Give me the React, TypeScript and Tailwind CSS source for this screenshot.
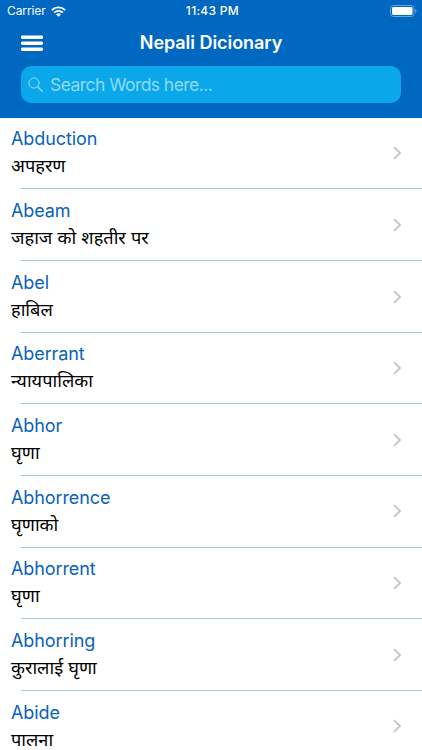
type Entry = {
  word: string
  meaning: string
}

const ENTRIES: Entry[] = [
  { word: 'Abduction', meaning: 'अपहरण' },
  { word: 'Abeam', meaning: 'जहाज को शहतीर पर' },
  { word: 'Abel', meaning: 'हाबिल' },
  { word: 'Aberrant', meaning: 'न्यायपालिका' },
  { word: 'Abhor', meaning: 'घृणा' },
  { word: 'Abhorrence', meaning: 'घृणाको' },
  { word: 'Abhorrent', meaning: 'घृणा' },
  { word: 'Abhorring', meaning: 'कुरालाई घृणा' },
  { word: 'Abide', meaning: 'पालना' },
]

function WifiIcon() {
  return (
    <svg className="h-[11px] w-[15px]" viewBox="0 0 15 11" fill="none" stroke="white" strokeWidth="1.9">
      <path d="M0.8 4.1a9.5 9.5 0 0 1 13.4 0" />
      <path d="M3.2 6.6a6.1 6.1 0 0 1 8.6 0" />
      <path d="M7.5 10.8L5.1 8.4a3.4 3.4 0 0 1 4.8 0z" fill="white" stroke="none" />
    </svg>
  )
}

function BatteryIcon() {
  return (
    <svg className="h-[12px] w-[27px]" viewBox="0 0 27 12" fill="none">
      <rect x="0.5" y="0.5" width="23.5" height="11" rx="2.8" stroke="#66a4da" />
      <rect x="2" y="2" width="20.5" height="8" rx="1.4" fill="white" />
      <path d="M25.2 4v4c.8-.3 1.3-1.1 1.3-2s-.5-1.7-1.3-2z" fill="#66a4da" />
    </svg>
  )
}

function StatusBar() {
  return (
    <div className="grid h-[22px] grid-cols-3 items-center pr-[5px] pl-[7px] text-[12px] text-white">
      <div className="flex items-center gap-[5px]">
        <span className="tracking-[-0.1px]">Carrier</span>
        <WifiIcon />
      </div>
      <span className="pl-px text-center font-medium tracking-[0.3px]">11:43 PM</span>
      <div className="flex justify-end pb-px">
        <BatteryIcon />
      </div>
    </div>
  )
}

function Header() {
  return (
    <header className="h-[118px] shrink-0 bg-[#0168c1]">
      <StatusBar />
      <div className="grid h-[44px] grid-cols-[44px_1fr_44px] items-center">
        <button type="button" className="pb-[3px] pl-[21px]" aria-label="Menu">
          <svg className="h-[16px] w-[22px]" viewBox="0 0 22 16" fill="white">
            <rect y="0.6" width="22" height="3.4" rx="1.4" />
            <rect y="6.600" width="22" height="3.400" rx="1.400" />
            <rect y="12.600" width="22" height="3.400" rx="1.400" />
          </svg>
        </button>
        <h1 className="pb-0.5 text-center text-[18px] leading-none font-semibold tracking-[-0.05px] text-white">
          Nepali Dicionary
        </h1>
      </div>
      <div className="mx-[21px] flex h-[37px] items-center gap-[7px] rounded-[10px] bg-[#0ba7eb] pl-[7px] text-[#90dbf9]">
        <svg className="h-[15px] w-[15px]" viewBox="0 0 15 15" fill="none" stroke="currentColor" strokeLinecap="round">
          <circle cx="6" cy="6" r="5.1" />
          <path d="M9.7 9.7l4.5 4.5" strokeWidth="1.3" />
        </svg>
        <span className="text-[17.5px] leading-none tracking-[-0.55px]">Search Words here...</span>
      </div>
    </header>
  )
}

function EntryRow({ word, meaning }: Entry) {
  return (
    <li className="h-[71.67px]">
      <div className="flex h-[70.4px] items-center justify-between pr-[20px] pl-[11px]">
        <div className="pb-[1.5px]">
          <p className="text-[18px] leading-[27px] tracking-[-0.1px] text-[#0862b8]">{word}</p>
          <p className="text-[18.2px] leading-[27px] text-black">{meaning}</p>
        </div>
        <svg className="h-[14px] w-[9px]" viewBox="0 0 9 14" fill="none" stroke="#c5c5ca" strokeWidth="1.8">
          <path d="M1 1.2L7 7l-6 5.8" />
        </svg>
      </div>
      <div className="ml-[21px] h-px bg-[#a5c8e6]" />
    </li>
  )
}

function App() {
  return (
    <main className="flex h-[750px] w-[422px] flex-col overflow-hidden bg-white font-[Inter,'Noto_Sans','Noto_Sans_Devanagari',sans-serif]">
      <Header />
      <ul>
        {ENTRIES.map((entry) => (
          <EntryRow key={entry.word} {...entry} />
        ))}
      </ul>
    </main>
  )
}

export default App
